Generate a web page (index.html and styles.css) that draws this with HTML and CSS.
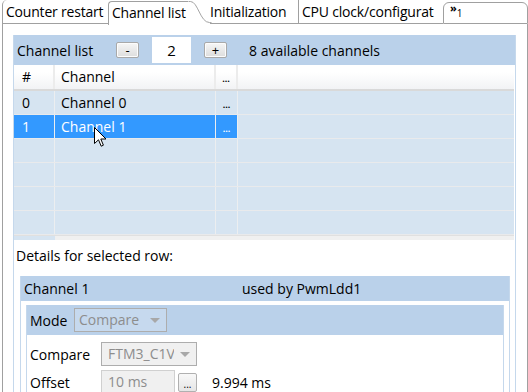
FILE: index.html
```html
<!DOCTYPE html>
<html lang="en">
<head>
    <meta charset="UTF-8">
    <title>Channel list</title>
    <link rel="stylesheet" href="styles.css">
</head>
<body>
    <div class="tabs">
        <div class="tab first">Counter restart</div>
        <div class="tab active">Channel list</div>
        <svg class="tab-curve" width="24" height="24" viewBox="0 0 24 24">
            <path d="M0 0.5 H2 C10 0.5 12 22.5 22 22.5 H24 V24 H0 Z" fill="#ffffff"/>
            <path d="M0 0.5 H2 C10 0.5 12 22.5 22 22.5 H24" fill="none" stroke="#a0a0a0"/>
        </svg>
        <div class="tab init">Initialization</div>
        <div class="tab sep">CPU clock/configurat</div>
        <div class="chevron"><span class="chev">&raquo;</span><span class="chev-num">1</span></div>
    </div>

    <div class="page">
        <div class="section">
            <div class="bar">
                <span class="bar-label">Channel list</span>
                <span class="btn">-</span>
                <span class="spin-value">2</span>
                <span class="btn">+</span>
                <span class="bar-info">8 available channels</span>
            </div>
            <div class="table">
                <div class="row head">
                    <div class="cell c1">#</div>
                    <div class="cell c2">Channel</div>
                    <div class="cell c3">...</div>
                    <div class="cell c4"></div>
                </div>
                <div class="row">
                    <div class="cell c1">0</div>
                    <div class="cell c2">Channel 0</div>
                    <div class="cell c3">...</div>
                    <div class="cell c4"></div>
                </div>
                <div class="row selected">
                    <div class="cell c1">1</div>
                    <div class="cell c2">Channel 1</div>
                    <div class="cell c3">...</div>
                    <div class="cell c4"></div>
                </div>
                <div class="row"><div class="cell c1"></div><div class="cell c2"></div><div class="cell c3"></div><div class="cell c4"></div></div>
                <div class="row"><div class="cell c1"></div><div class="cell c2"></div><div class="cell c3"></div><div class="cell c4"></div></div>
                <div class="row"><div class="cell c1"></div><div class="cell c2"></div><div class="cell c3"></div><div class="cell c4"></div></div>
                <div class="row"><div class="cell c1"></div><div class="cell c2"></div><div class="cell c3"></div><div class="cell c4"></div></div>
                <div class="table-end"><span class="thumb"></span></div>
            </div>

            <div class="details-label">Details for selected row:</div>

            <div class="group">
                <div class="group-bar">
                    <span class="group-title">Channel 1</span>
                    <span class="group-used">used by PwmLdd1</span>
                </div>
                <div class="group-body">
                    <div class="subgroup">
                        <div class="mode-bar">
                            <span class="mode-label">Mode</span>
                            <span class="combo mode-combo">
                                <span class="combo-text">Compare</span>
                                <span class="combo-arrow"></span>
                            </span>
                        </div>
                        <div class="prop">
                            <span class="prop-label">Compare</span>
                            <span class="combo prop-combo">
                                <span class="combo-text">FTM3_C1V</span>
                                <span class="combo-arrow"></span>
                            </span>
                        </div>
                        <div class="prop">
                            <span class="prop-label">Offset</span>
                            <span class="field">10 ms</span>
                            <span class="dots-btn">...</span>
                            <span class="prop-value">9.994 ms</span>
                        </div>
                    </div>
                </div>
            </div>
        </div>
    </div>

    <svg class="cursor" width="13" height="21" viewBox="0 0 13 21">
        <path d="M0.5 0.5 V16.5 L4.5 12.8 L7.2 19.2 L9.4 18.2 L6.8 12 H12 Z" fill="#ffffff" stroke="#000000" stroke-width="1" stroke-linejoin="miter"/>
    </svg>
</body>
</html>
```

FILE: styles.css
```css
body {
    font-family: "Open Sans", "Noto Sans", sans-serif;
    font-size: 14px;
    color: #000;
    margin: 0;
    padding: 0;
    width: 528px;
    height: 392px;
    overflow: hidden;
    background: #ffffff;
    position: relative;
}
.tabs {
    display: flex;
    height: 24px;
    margin-left: 2px;
    width: 526px;
}
.tab {
    height: 23px;
    line-height: 23px;
    padding: 0 3px;
    border-bottom: 1px solid #a0a0a0;
    white-space: nowrap;
    overflow: hidden;
    flex: none;
    letter-spacing: -0.2px;
}
.tab.first {
    border-left: 1px solid #a0a0a0;
    padding-left: 3px;
    padding-right: 0;
    width: 102px;
    border-top-left-radius: 5px;
}
.tab.active {
    border-left: 1px solid #a0a0a0;
    border-top: 1px solid #a0a0a0;
    border-bottom: none;
    border-top-left-radius: 4px;
    height: 23px;
    margin-top: 1px;
    line-height: 21px;
    padding: 0 0 0 3px;
    width: 76px;
}
.tab-curve {
    flex: none;
    margin-top: 1px;
    height: 23px;
}
.tab.init {
    width: 88px;
    padding: 0;
    margin-left: -2px;
    position: relative;
}
.tab.sep {
    border-left: 1px solid #a0a0a0;
    width: 141px;
    padding: 0 0 0 3px;
}
.chevron {
    flex: 1;
    margin-top: 2px;
    border-top: 1px solid #a0a0a0;
    border-left: 1px solid #a0a0a0;
    border-right: 1px solid #a0a0a0;
    border-top-left-radius: 6px;
    border-top-right-radius: 6px;
    border-bottom: 1px solid #a0a0a0;
    height: 20px;
    padding-left: 6px;
}
.chev {
    font-size: 11px;
    font-weight: bold;
    line-height: 9px;
    vertical-align: top;
}
.chev-num {
    font-size: 10px;
    vertical-align: top;
    line-height: 20px;
}
.page {
    margin-left: 2px;
    width: 503px;
    height: 357px;
    border-left: 1px solid #a0a0a0;
    border-right: 1px solid #a0a0a0;
    padding: 11px 11px 0 10px;
}
.section {
    border-left: 1px solid #c5d8ec;
    border-right: 1px solid #c5d8ec;
    height: 357px;
}
.bar {
    background: #bad1ea;
    height: 30px;
    display: flex;
    align-items: center;
}
.bar-label {
    width: 99px;
    padding-left: 3px;
}
.btn {
    width: 21px;
    height: 14px;
    border: 1px solid #a9a9a9;
    border-radius: 2px;
    background: linear-gradient(#f6f6f6, #dddddd);
    box-shadow: inset 0 0 0 1px #fcfcfc;
    display: flex;
    align-items: center;
    justify-content: center;
    font-size: 13px;
    line-height: 14px;
}
.spin-value {
    width: 39px;
    height: 26px;
    margin: 0 13px;
    background: #ffffff;
    display: flex;
    align-items: center;
    justify-content: center;
    font-size: 15px;
}
.bar-info {
    margin-left: 22px;
}
.table {
    margin-right: 1px;
}
.row {
    display: flex;
    height: 23px;
    border-bottom: 1px solid #e9eaec;
    background: #d6e4f1;
}
.row.head {
    height: 24px;
    background: linear-gradient(#ffffff 30%, #f2f3f5);
    border-bottom: 2px solid #d9d9d9;
}
.row.selected {
    background: #3399ff;
    color: #ffffff;
}
.row.selected .c4 {
    background: #d6e4f1;
}
.cell {
    line-height: 23px;
    border-right: 1px solid #eceef0;
    white-space: nowrap;
    overflow: hidden;
}
.head .cell {
    border-right: 2px solid #ececec;
}
.c1 {
    width: 32px;
    padding-left: 8px;
}
.c2 {
    width: 154px;
    padding-left: 6px;
}
.c3 {
    width: 21px;
    text-align: center;
    font-size: 9px;
    font-weight: bold;
    line-height: 28px;
}
.head .c1 {
    width: 31px;
}
.head .c2 {
    width: 153px;
}
.head .c3 {
    width: 20px;
}
.c4 {
    flex: 1;
    border-right: none;
}
.head .c4 {
    border-right: none;
}
.table-end {
    height: 4px;
    background: #f0f0f0;
    border-top: 1px solid #e0e0e0;
}
.thumb {
    display: block;
    width: 41px;
    height: 4px;
    background: #d6e4f1;
}
.details-label {
    padding: 6px 0 0 2px;
    height: 30px;
}
.group {
    margin: 0 5px 0 6px;
    border-left: 1px solid #c5d8ec;
    border-right: 1px solid #c5d8ec;
}
.group-bar {
    background: #bad1ea;
    height: 25px;
    display: flex;
    align-items: center;
    padding-left: 3px;
}
.group-title {
    width: 218px;
}
.group-body {
    padding: 4px 5px 0 5px;
}
.subgroup {
    border-left: 1px solid #c5d8ec;
    border-right: 1px solid #c5d8ec;
}
.mode-bar {
    background: #bad1ea;
    height: 30px;
    display: flex;
    align-items: center;
    padding-left: 3px;
}
.mode-label {
    width: 44px;
}
.combo {
    display: flex;
    height: 22px;
    border: 1px solid #adadad;
    color: #8d8d8d;
}
.mode-combo {
    width: 91px;
    background: #c6d9ee;
}
.combo-text {
    flex: 1;
    line-height: 22px;
    padding-left: 4px;
    overflow: hidden;
    white-space: nowrap;
}
.combo-arrow {
    width: 22px;
    flex: none;
    display: flex;
    align-items: center;
    justify-content: center;
}
.combo-arrow::before {
    content: "";
    border-left: 5px solid transparent;
    border-right: 5px solid transparent;
    border-top: 5px solid #a8a8a8;
}
.prop {
    display: flex;
    align-items: center;
    height: 28px;
    padding-left: 3px;
}
.prop:nth-child(2) {
    margin-top: 5px;
}
.prop-label {
    width: 71px;
}
.prop-combo {
    width: 94px;
    background: #f0f0f0;
}
.prop-combo .combo-text {
    padding-left: 6px;
}
.field {
    width: 66px;
    height: 22px;
    border: 1px solid #d0d0d0;
    background: #f0f0f0;
    color: #8d8d8d;
    line-height: 22px;
    padding-left: 6px;
}
.dots-btn {
    width: 17px;
    height: 17px;
    margin-left: 3px;
    border: 1px solid #b0b0b0;
    border-radius: 2px;
    background: linear-gradient(#f8f8f8, #e6e6e6);
    font-size: 10px;
    line-height: 20px;
    text-align: center;
}
.prop-value {
    margin-left: 15px;
}
.cursor {
    position: absolute;
    left: 94px;
    top: 127px;
}
```
